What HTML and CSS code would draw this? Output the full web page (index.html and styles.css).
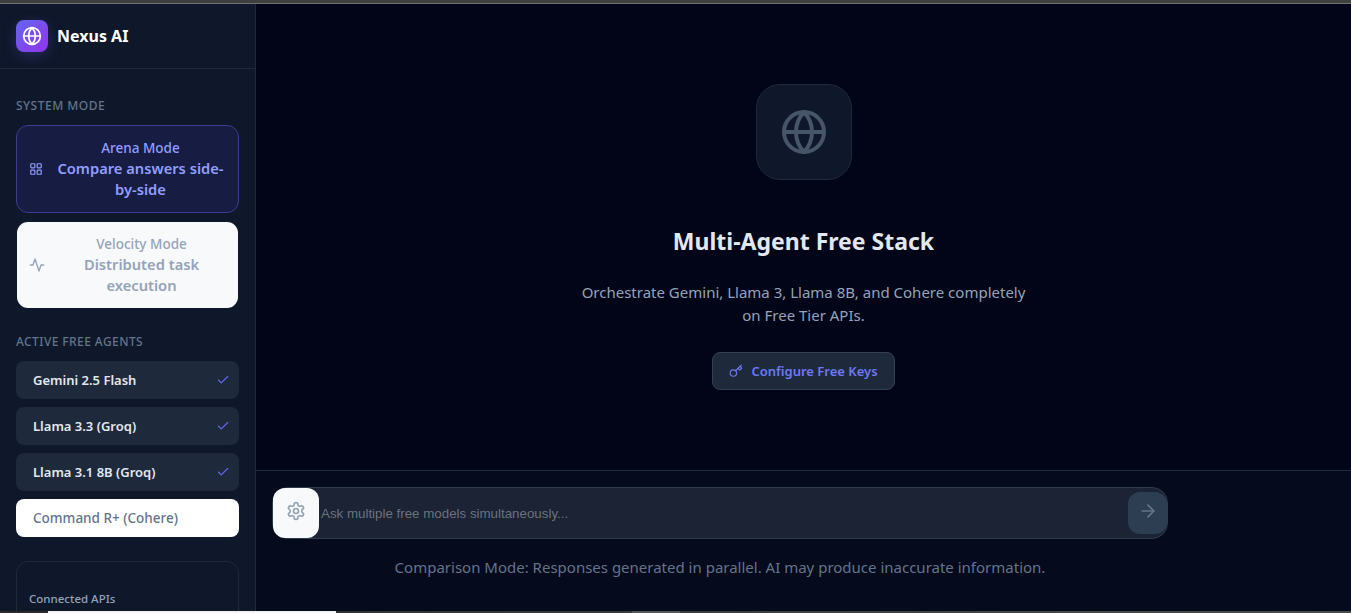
FILE: index.html
```html
<!DOCTYPE html>
<html>
<head>
<meta charset="UTF-8">
<title>Nexus AI</title>
<link rel="stylesheet" href="styles.css">
</head>
<body>
<div class="topline"></div>
<div class="app">
    <div class="sidebar">
        <div class="brand">
            <div class="brand_icon">
                <svg width="20" height="20" viewBox="0 0 24 24" fill="none" stroke="currentColor" stroke-width="2" stroke-linecap="round" stroke-linejoin="round"><circle cx="12" cy="12" r="10"/><path d="M12 2a14.5 14.5 0 0 0 0 20 14.5 14.5 0 0 0 0-20"/><path d="M2 12h20"/></svg>
            </div>
            <span class="brand_name">Nexus AI</span>
        </div>
        <div class="side_body">
            <div class="side_label">SYSTEM MODE</div>
            <div class="mode active">
                <svg width="14" height="14" viewBox="0 0 24 24" fill="none" stroke="currentColor" stroke-width="2" stroke-linecap="round" stroke-linejoin="round"><rect x="3" y="3" width="7" height="7" rx="1"/><rect x="14" y="3" width="7" height="7" rx="1"/><rect x="14" y="14" width="7" height="7" rx="1"/><rect x="3" y="14" width="7" height="7" rx="1"/></svg>
                <div class="mode_text">
                    <span class="mode_name">Arena Mode</span>
                    <span class="mode_desc">Compare answers side-by-side</span>
                </div>
            </div>
            <div class="mode light">
                <svg width="16" height="16" viewBox="0 0 24 24" fill="none" stroke="currentColor" stroke-width="2" stroke-linecap="round" stroke-linejoin="round"><path d="M22 12h-4l-3 9L9 3l-3 9H2"/></svg>
                <div class="mode_text">
                    <span class="mode_name">Velocity Mode</span>
                    <span class="mode_desc">Distributed task execution</span>
                </div>
            </div>
            <div class="side_label agents_label">ACTIVE FREE AGENTS</div>
            <div class="agent on">Gemini 2.5 Flash
                <svg width="14" height="14" viewBox="0 0 24 24" fill="none" stroke="currentColor" stroke-width="2" stroke-linecap="round" stroke-linejoin="round"><path d="M20 6 9 17l-5-5"/></svg>
            </div>
            <div class="agent on">Llama 3.3 (Groq)
                <svg width="14" height="14" viewBox="0 0 24 24" fill="none" stroke="currentColor" stroke-width="2" stroke-linecap="round" stroke-linejoin="round"><path d="M20 6 9 17l-5-5"/></svg>
            </div>
            <div class="agent on">Llama 3.1 8B (Groq)
                <svg width="14" height="14" viewBox="0 0 24 24" fill="none" stroke="currentColor" stroke-width="2" stroke-linecap="round" stroke-linejoin="round"><path d="M20 6 9 17l-5-5"/></svg>
            </div>
            <div class="agent off">Command R+ (Cohere)</div>
            <div class="api_box">
                <div class="api_title">Connected APIs</div>
            </div>
        </div>
    </div>
    <div class="main">
        <div class="hero">
            <div class="hero_icon">
                <svg width="48" height="48" viewBox="0 0 24 24" fill="none" stroke="currentColor" stroke-width="2" stroke-linecap="round" stroke-linejoin="round"><circle cx="12" cy="12" r="10"/><path d="M12 2a14.5 14.5 0 0 0 0 20 14.5 14.5 0 0 0 0-20"/><path d="M2 12h20"/></svg>
            </div>
            <h2>Multi-Agent Free Stack</h2>
            <p>Orchestrate Gemini, Llama 3, Llama 8B, and Cohere completely on Free Tier APIs.</p>
            <a href="javascript:;" class="config">
                <svg width="14" height="14" viewBox="0 0 24 24" fill="none" stroke="currentColor" stroke-width="2" stroke-linecap="round" stroke-linejoin="round"><path d="m15.5 7.5 2.3 2.3a1 1 0 0 0 1.4 0l2.1-2.1a1 1 0 0 0 0-1.4L19 4"/><path d="m21 2-9.6 9.6"/><circle cx="7.5" cy="15.5" r="5.5"/></svg>
                Configure Free Keys
            </a>
        </div>
        <div class="composer">
            <div class="input_row">
                <div class="settings">
                    <svg width="20" height="20" viewBox="0 0 24 24" fill="none" stroke="currentColor" stroke-width="2" stroke-linecap="round" stroke-linejoin="round"><path d="M12.22 2h-.44a2 2 0 0 0-2 2v.18a2 2 0 0 1-1 1.73l-.43.25a2 2 0 0 1-2 0l-.15-.08a2 2 0 0 0-2.73.73l-.22.38a2 2 0 0 0 .73 2.73l.15.1a2 2 0 0 1 1 1.72v.51a2 2 0 0 1-1 1.74l-.15.09a2 2 0 0 0-.73 2.73l.22.38a2 2 0 0 0 2.73.73l.15-.08a2 2 0 0 1 2 0l.43.25a2 2 0 0 1 1 1.73V20a2 2 0 0 0 2 2h.44a2 2 0 0 0 2-2v-.18a2 2 0 0 1 1-1.73l.43-.25a2 2 0 0 1 2 0l.15.08a2 2 0 0 0 2.73-.73l.22-.39a2 2 0 0 0-.73-2.73l-.15-.08a2 2 0 0 1-1-1.74v-.5a2 2 0 0 1 1-1.74l.15-.09a2 2 0 0 0 .73-2.73l-.22-.38a2 2 0 0 0-2.73-.73l-.15.08a2 2 0 0 1-2 0l-.43-.25a2 2 0 0 1-1-1.73V4a2 2 0 0 0-2-2z"/><circle cx="12" cy="12" r="3"/></svg>
                </div>
                <input class="ask" type="text" placeholder="Ask multiple free models simultaneously...">
                <div class="send">
                    <svg width="20" height="20" viewBox="0 0 24 24" fill="none" stroke="currentColor" stroke-width="2" stroke-linecap="round" stroke-linejoin="round"><path d="M5 12h14"/><path d="m12 5 7 7-7 7"/></svg>
                </div>
            </div>
            <div class="note">Comparison Mode: Responses generated in parallel. AI may produce inaccurate information.</div>
        </div>
    </div>
</div>
<div class="bottomline"><span class="thumb_a"></span><span class="thumb_b"></span></div>
</body>
</html>
```

FILE: styles.css
```css
* {
    box-sizing: border-box;
}

html, body {
    height: 100%;
}

body {
    margin: 0;
    display: flex;
    flex-direction: column;
    overflow: hidden;
    font-family: "Noto Sans", sans-serif;
    background: #020617;
    color: #e2e8f0;
}

.topline {
    flex: 0 0 4px;
    background: #3f3f3f;
    border-bottom: 1px solid #707070;
}

.bottomline {
    flex: 0 0 2px;
    display: flex;
    background: linear-gradient(90deg, #2a2a2a, #4d4d48);
}

.bottomline .thumb_a {
    width: 288px;
    margin-left: 48px;
    background: #f2f2f2;
}

.bottomline .thumb_b {
    width: 48px;
    margin-left: 296px;
    background: #555;
}

.app {
    flex: 1;
    min-height: 0;
    display: flex;
}

.sidebar {
    flex: 0 0 256px;
    background: #0f172a;
    border-right: 1px solid #1e293b;
    overflow: hidden;
}

.brand {
    height: 65px;
    padding: 0 16px;
    display: flex;
    align-items: center;
    gap: 9px;
    border-bottom: 1px solid #1e293b;
}

.brand_icon {
    width: 32px;
    height: 32px;
    border-radius: 8px;
    display: flex;
    align-items: center;
    justify-content: center;
    color: white;
    background: linear-gradient(135deg, #6366f1, #9333ea);
    box-shadow: 0 4px 14px rgba(99, 102, 241, 0.25);
}

.brand_name {
    font-size: 16px;
    font-weight: 700;
    color: white;
}

.side_body {
    padding: 29px 16px 0;
}

.side_label {
    font-size: 12px;
    line-height: 16px;
    letter-spacing: 0.5px;
    color: #64748b;
    font-weight: 500;
    margin-bottom: 11px;
}

.agents_label {
    margin-top: 25px;
    margin-bottom: 11px;
    letter-spacing: 0.42px;
}

.mode {
    display: flex;
    align-items: center;
    gap: 12px;
    padding: 12px;
    border-radius: 12px;
    margin-bottom: 8px;
    font-size: 14.7px;
    font-weight: 600;
    border: 1px solid transparent;
    background-clip: padding-box;
}

.mode svg {
    flex: none;
}

.mode.active {
    background-color: #171c42;
    border-color: #3a3f95;
    color: #919eff;
}

.mode.light {
    background-color: #f8f9fa;
    color: #94a3b8;
}

.mode_text {
    flex: 1;
    text-align: center;
}

.mode_name {
    display: block;
    font-size: 13.5px;
    font-weight: 500;
    line-height: 20px;
}

.mode_desc {
    display: block;
    line-height: 21px;
}

.agent {
    height: 38px;
    padding: 0 9px 0 17px;
    margin-bottom: 8px;
    border-radius: 8px;
    display: flex;
    align-items: center;
    justify-content: space-between;
    font-size: 13px;
}

.agent.on {
    background: #1e293b;
    color: #e2e8f0;
    font-weight: 600;
}

.agent.on svg {
    color: #6366f1;
}

.agent.off {
    background: white;
    color: #64748b;
    font-size: 13.5px;
    font-weight: 500;
}

.api_box {
    margin-top: 24px;
    height: 80px;
    padding: 29px 12px 0;
    border: 1px solid #1e293b;
    border-radius: 12px;
}

.api_title {
    font-size: 11.5px;
    line-height: 16px;
    font-weight: 500;
    color: #94a3b8;
}

.main {
    flex: 1;
    min-width: 0;
    display: flex;
    flex-direction: column;
}

.hero {
    flex: 1;
    display: flex;
    flex-direction: column;
    align-items: center;
    padding-top: 80px;
    background: #020418;
}

.hero_icon {
    width: 96px;
    height: 96px;
    border-radius: 24px;
    background: #0f172a;
    border: 1px solid #1e293b;
    color: #475569;
    display: flex;
    align-items: center;
    justify-content: center;
}

.hero h2 {
    margin: 43px 0 0;
    font-size: 23px;
    line-height: 36px;
    font-weight: 700;
    color: #e2e8f0;
}

.hero p {
    width: 448px;
    margin: 22px 0 0;
    font-size: 15px;
    line-height: 23px;
    text-align: center;
    color: #94a3b8;
}

.config {
    margin-top: 25px;
    height: 38px;
    padding: 0 16px;
    display: flex;
    align-items: center;
    gap: 8px;
    font-size: 13px;
    font-weight: 600;
    color: #6f78f5;
    text-decoration: none;
    background: #1e293b;
    border: 1px solid #334155;
    border-radius: 8px;
}

.composer {
    flex: 0 0 141px;
    padding: 16px 16px 0;
    background: #050a1c;
    border-top: 1px solid #1e293b;
}

.input_row {
    width: 896px;
    height: 52px;
    display: flex;
    align-items: center;
    background: #1b2334;
    border: 1px solid #2f3b4e;
    border-radius: 16px;
}

.settings {
    flex: 0 0 46px;
    height: 50px;
    padding-bottom: 4px;
    display: flex;
    align-items: center;
    justify-content: center;
    background: #f8f9fa;
    border-radius: 12px;
    color: #94a3b8;
}

.ask {
    flex: 1;
    min-width: 0;
    height: 100%;
    padding: 0 2px;
    border: none;
    outline: none;
    background: transparent;
    font-family: "Liberation Sans", sans-serif;
    font-size: 13.33px;
    color: #e2e8f0;
}

.ask::placeholder {
    color: #6b7280;
    opacity: 1;
}

.send {
    flex: 0 0 39px;
    height: 42px;
    padding-bottom: 4px;
    display: flex;
    align-items: center;
    justify-content: center;
    background: #2e3e52;
    border-radius: 12px;
    color: #64748b;
}

.note {
    width: 896px;
    margin-top: 17px;
    text-align: center;
    font-size: 15px;
    line-height: 22px;
    color: #64748b;
}
```
